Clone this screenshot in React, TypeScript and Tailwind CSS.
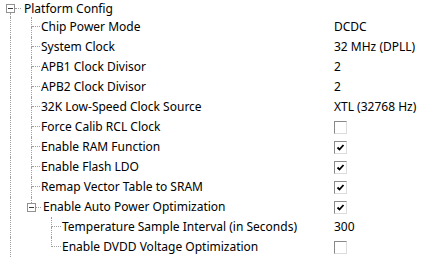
import React from 'react';

type Row = {
  label: string;
  level: 0 | 1 | 2;
  value?: string;
  check?: boolean;
  expander?: boolean;
  last?: boolean;
};

const rows: Row[] = [
  { label: 'Platform Config', level: 0, expander: true },
  { label: 'Chip Power Mode', level: 1, value: 'DCDC' },
  { label: 'System Clock', level: 1, value: '32 MHz (DPLL)' },
  { label: 'APB1 Clock Divisor', level: 1, value: '2' },
  { label: 'APB2 Clock Divisor', level: 1, value: '2' },
  { label: '32K Low-Speed Clock Source', level: 1, value: 'XTL (32768 Hz)' },
  { label: 'Force Calib RCL Clock', level: 1, check: false },
  { label: 'Enable RAM Function', level: 1, check: true },
  { label: 'Enable Flash LDO', level: 1, check: true },
  { label: 'Remap Vector Table to SRAM', level: 1, check: true },
  { label: 'Enable Auto Power Optimization', level: 1, check: true, expander: true, last: true },
  { label: 'Temperature Sample Interval (in Seconds)', level: 2, value: '300' },
  { label: 'Enable DVDD Voltage Optimization', level: 2, check: false, last: true },
];

const dot = 'border-dotted border-[#a0a0a0]';

// tree expander box with the "-" glyph
const Box = () => (
  <span className="w-[9px] h-[9px] shrink-0 border border-[#919191] bg-white flex items-center justify-center">
    <span className="w-[5px] h-px bg-[#3c3c3c]" />
  </span>
);

// expander cell: guide line above / below the box, connector to the right
const ExpanderCell = ({ pad, up, down }: { pad: string; up: boolean; down: boolean }) => (
  <span className={`flex self-stretch w-[22px] shrink-0 ${pad}`}>
    <span className="flex flex-col w-[9px]">
      <span className={`flex-1 ml-[4px] ${up ? `border-l ${dot}` : ''}`} />
      <Box />
      <span className={`flex-1 ml-[4px] ${down ? `border-l ${dot}` : ''}`} />
    </span>
    <span className={`flex-1 self-center mr-[1px] border-t ${dot}`} />
  </span>
);

// tee / elbow connector cell
const TeeCell = ({ cols, last }: { cols: string; last?: boolean }) => (
  <span className={`grid ${cols} grid-rows-2 w-[21px] self-stretch shrink-0`}>
    <span className={`border-r ${dot}`} />
    <span className={`border-b mr-[1px] ${dot}`} />
    <span className={last ? '' : `border-r ${dot}`} />
    <span />
  </span>
);

// plain vertical guide
const PassCell = () => (
  <span className="w-[20px] self-stretch shrink-0">
    <span className={`block ml-[10px] h-full border-l ${dot}`} />
  </span>
);

const CheckBox = ({ checked }: { checked: boolean }) => (
  <span className="w-[13px] h-[13px] border border-t-[#8a8a8a] border-l-[#8a8a8a] border-r-[#dcdcdc] border-b-[#dcdcdc] bg-white flex items-center justify-center">
    {checked && (
      <svg width="9" height="9" viewBox="0 0 9 9">
        <path d="M1.5 4.5 L3.5 6.5 L7.5 2" stroke="#000" strokeWidth="1.8" fill="none" />
      </svg>
    )}
  </span>
);

function TreeRow({ row, first }: { row: Row; first: boolean }) {
  return (
    <div className={`flex items-center ${first ? 'h-[17px]' : 'h-[20px]'}`}>
      {first ? <ExpanderCell pad="pl-[6px]" up={false} down /> : <PassCell />}
      {row.level === 1 &&
        (row.expander ? (
          <ExpanderCell pad="pl-[7px]" up down={false} />
        ) : (
          <TeeCell cols="grid-cols-[12px_1fr]" last={row.last} />
        ))}
      {row.level === 2 && (
        <>
          <span className="w-[21px] shrink-0" />
          <TeeCell cols="grid-cols-[11px_1fr]" last={row.last} />
        </>
      )}
      <span className={`flex-1 whitespace-nowrap ${row.level === 0 ? 'pl-[2px]' : row.expander ? 'pl-[1px]' : ''}`}>
        {row.label}
      </span>
      <span className="w-[100px] shrink-0 flex items-center whitespace-nowrap">
        {row.value}
        {row.check !== undefined && <CheckBox checked={row.check} />}
      </span>
    </div>
  );
}

export default function App() {
  return (
    <div className="w-[434px] h-[258px] bg-white overflow-hidden text-[12px] text-black font-['Noto_Sans',sans-serif] leading-none">
      {rows.map((r, i) => (
        <TreeRow key={r.label} row={r} first={i === 0} />
      ))}
    </div>
  );
}
